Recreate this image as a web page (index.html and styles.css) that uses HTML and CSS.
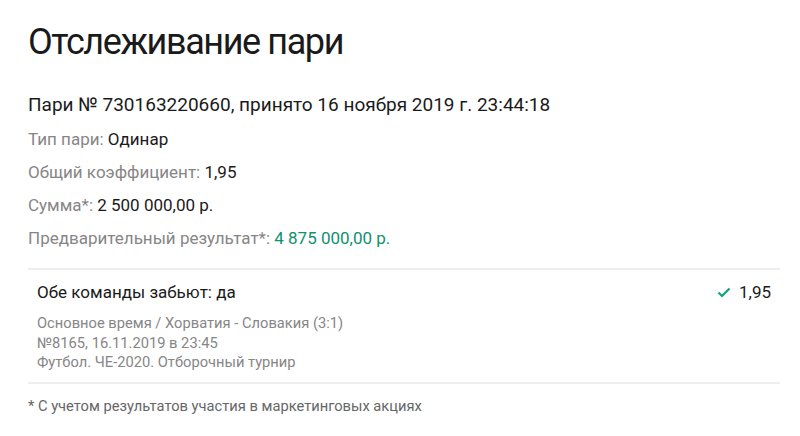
FILE: index.html
```html
<!DOCTYPE html>
<html lang="ru">
<head>
    <meta charset="UTF-8">
    <meta name="viewport" content="width=device-width, initial-scale=1.0">
    <title>Отслеживание пари</title>
    <link rel="stylesheet" href="styles.css">
</head>
<body>
    <div class="page">
        <h1>Отслеживание пари</h1>

        <p class="bet-number">Пари № 730163220660, принято 16 ноября 2019 г. 23:44:18</p>

        <ul class="bet-info">
            <li><span class="label">Тип пари:</span> Одинар</li>
            <li><span class="label">Общий коэффициент:</span> 1,95</li>
            <li><span class="label">Сумма*:</span> 2 500 000,00 р.</li>
            <li><span class="label">Предварительный результат*:</span> <span class="win">4 875 000,00 р.</span></li>
        </ul>

        <div class="events">
            <div class="event">
                <div class="event-head">
                    <div class="event-title">Обе команды забьют: да</div>
                    <div class="event-coef">
                        <svg class="check" width="14" height="11" viewBox="0 0 14 11">
                            <path d="M1.5 5.5 L5 9 L12.5 1.5" fill="none" stroke="#14a37a" stroke-width="2.2"/>
                        </svg>
                        1,95
                    </div>
                </div>
                <div class="event-meta">
                    <div>Основное время / Хорватия - Словакия (3:1)</div>
                    <div>№8165, 16.11.2019 в 23:45</div>
                    <div>Футбол. ЧЕ-2020. Отборочный турнир</div>
                </div>
            </div>
        </div>

        <p class="note">* С учетом результатов участия в маркетинговых акциях</p>
    </div>
</body>
</html>
```

FILE: styles.css
```css
body {
    margin: 0;
    font-family: 'Roboto', sans-serif;
    color: #1a1a1a;
    background-color: #fff;
}

.page {
    padding: 20px 20px 0 28px;
}

h1 {
    margin: 0;
    font-size: 36px;
    font-weight: 400;
    line-height: 44px;
    letter-spacing: -1.4px;
}

.bet-number {
    margin: 29px 0 0;
    font-size: 19px;
    line-height: 24px;
}

.bet-info {
    list-style: none;
    margin: 6px 0 0;
    padding: 0;
}

.bet-info li {
    font-size: 17px;
    line-height: 33px;
}

.label {
    color: #868686;
}

.win {
    color: #10906e;
}

.events {
    margin-top: 13px;
    border-top: 2px solid #eeeeee;
    border-bottom: 2px solid #eeeeee;
}

.event {
    padding: 10px 9px 9px 9px;
}

.event-head {
    display: flex;
    justify-content: space-between;
    align-items: center;
    font-size: 17px;
    line-height: 24px;
}

.event-coef {
    display: flex;
    align-items: center;
    gap: 8px;
}

.event-meta {
    margin-top: 10px;
    font-size: 14.7px;
    line-height: 19.5px;
    color: #868686;
}

.note {
    margin: 12px 0 0;
    font-size: 14.7px;
    line-height: 20px;
    color: #666;
}
```
